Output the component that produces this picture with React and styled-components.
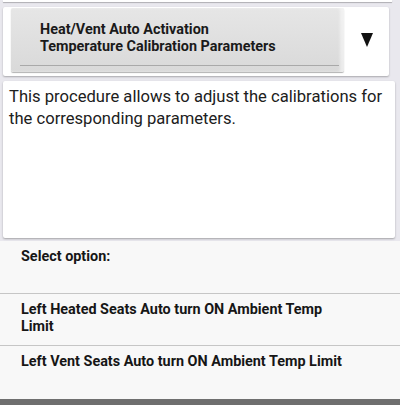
import React from "react";
import styled, { createGlobalStyle } from "styled-components";

const GlobalStyle = createGlobalStyle`
  html, body {
    margin: 0;
    padding: 0;
  }
  body {
    font-family: Roboto, "Noto Sans", sans-serif;
    color: #1b1b1b;
  }
`;

const Screen = styled.div`
  width: 400px;
  height: 405px;
  overflow: hidden;
  background: #e9e8ee;
  display: flex;
  flex-direction: column;
`;

const TopStub = styled.div`
  height: 2px;
  margin: 0 8px 0 3px;
  background: #fff;
  box-shadow: 0 1px 1px rgba(0, 0, 0, 0.25);
`;

const HeaderCard = styled.div`
  margin: 5px 11px 0 3px;
  padding: 1px 0 4px 8px;
  background: #fff;
  display: flex;
  box-shadow: 0 1px 2px rgba(0, 0, 0, 0.28);
  border-radius: 2px;
`;

const TitleButton = styled.div`
  flex: 1;
  height: 64px;
  box-sizing: border-box;
  padding: 13px 0 0 29px;
  background: linear-gradient(#e6e6e6, #d9d9d9);
  border-radius: 2px;
  box-shadow: 0 1px 1px rgba(0, 0, 0, 0.3), inset -4px 0 3px rgba(255, 255, 255, 0.5);
  position: relative;
  font-size: 14.4px;
  font-weight: 700;
  line-height: 17px;
  color: #1a1a1a;

  &::after {
    content: "";
    position: absolute;
    left: 9px;
    right: 5px;
    bottom: 6px;
    height: 1px;
    background: #a9a9a9;
  }
`;

const ArrowCell = styled.div`
  width: 45px;
  display: flex;
  align-items: center;
  justify-content: center;
`;

const Card = styled.div`
  margin: 5px 5px 0 3px;
  height: 157px;
  box-sizing: border-box;
  padding: 5px 2px 0 6px;
  background: #fff;
  box-shadow: 0 1px 2px rgba(0, 0, 0, 0.3);
  border-radius: 2px;
  font-size: 16.6px;
  line-height: 22px;
  color: #202020;
`;

const OptionList = styled.div`
  margin-top: 3px;
  flex: 1;
  background: #f8f8f8;
  display: flex;
  flex-direction: column;
`;

const Row = styled.div`
  height: 52px;
  box-sizing: border-box;
  padding: 7px 50px 0 21px;
  font-size: 14.4px;
  font-weight: 700;
  line-height: 17px;
  color: #161616;
  border-top: ${(p) => (p.$first ? "none" : "1px solid #c6c6c6")};
`;

const BottomBar = styled.div`
  height: 6px;
  background: #6f6f6f;
  margin-top: auto;
`;

const DownArrow = () => (
  <svg width="12" height="14" viewBox="0 0 12 14">
    <polygon points="0,0 12,0 6,14" fill="#111" />
  </svg>
);

export default function App() {
  return (
    <>
      <GlobalStyle />
      <Screen>
        <TopStub />
        <HeaderCard>
          <TitleButton>
            Heat/Vent Auto Activation
            <br />
            Temperature Calibration Parameters
          </TitleButton>
          <ArrowCell>
            <DownArrow />
          </ArrowCell>
        </HeaderCard>
        <Card>
          This procedure allows to adjust the calibrations for the
          corresponding parameters.
        </Card>
        <OptionList>
          <Row $first>Select option:</Row>
          <Row>Left Heated Seats Auto turn ON Ambient Temp Limit</Row>
          <Row>Left Vent Seats Auto turn ON Ambient Temp Limit</Row>
          <BottomBar />
        </OptionList>
      </Screen>
    </>
  );
}
